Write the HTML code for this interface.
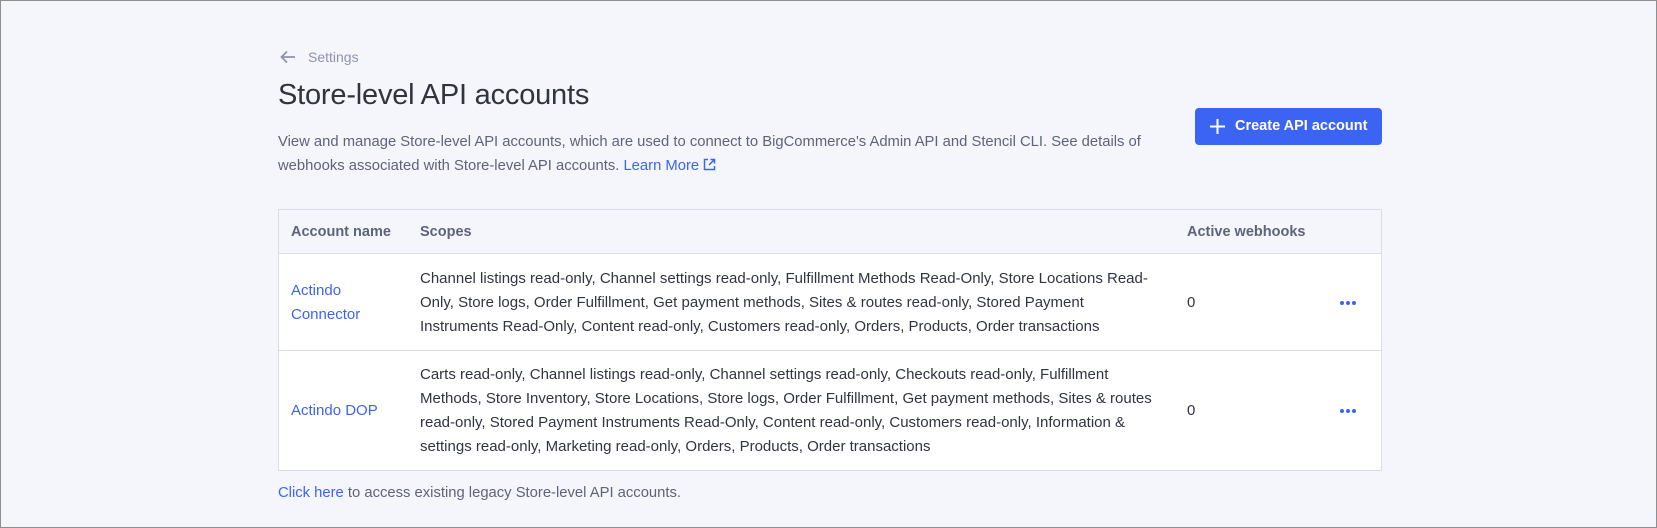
<!DOCTYPE html>
<html><head><meta charset="utf-8"><style>
*{margin:0;padding:0;box-sizing:border-box}
html,body{width:1657px;height:528px;overflow:hidden}
body{background:#f5f6fb;font-family:"Liberation Sans",sans-serif;color:#313440;position:relative;border:1px solid #8f8f8f}
.abs{position:absolute;white-space:nowrap}
.back{left:279px;top:48px;font-size:14px;color:#8c93ad}
.title{left:277px;top:78px;font-size:29px;font-weight:300;color:#313440;letter-spacing:-0.2px}
.desc{left:277px;top:129px;font-size:14.8px;line-height:24px;color:#5e637a}
a{color:#3c64f4;text-decoration:none}
.btn{left:1194px;top:107px;width:187px;height:37px;background:#3c64f4;border-radius:4px;color:#fff;font-size:14.5px;font-weight:bold;line-height:37px;padding-left:40px}
.btn svg{position:absolute;left:15px;top:11px}
.table{position:absolute;left:277px;top:208px;width:1104px;height:262px;background:#fff;border:1px solid #d9dce9}
.head{position:absolute;left:0;top:0;right:0;height:44px;background:#f5f6fb;border-bottom:1px solid #d9dce9;font-weight:bold;font-size:14.5px;color:#5e637a}
.row{position:absolute;left:0;right:0;font-size:15px;color:#313440}
.r1{top:44px;height:97px;border-bottom:1px solid #d9dce9}
.r2{top:141px;height:120px}
.c{position:absolute;white-space:nowrap;line-height:24px}
.dots{position:absolute;left:1061px;width:18px;height:4px}
.dots i{float:left;width:4px;height:4px;border-radius:50%;background:#3c64f4;margin-right:2px}
</style></head><body>
<div class="abs back"><svg width="16" height="14" viewBox="0 0 16 14" style="vertical-align:-2px;margin-right:12px"><path d="M15 7H2M7 1.5L1.5 7L7 12.5" stroke="#8c93ad" stroke-width="1.8" fill="none"/></svg>Settings</div>
<div class="abs title">Store-level API accounts</div>
<div class="abs desc">View and manage Store-level API accounts, which are used to connect to BigCommerce's Admin API and Stencil CLI. See details of<br>webhooks associated with Store-level API accounts. <a>Learn More <svg width="13" height="13" viewBox="0 0 13 13" style="vertical-align:-1px"><path d="M5 1.5H1.5v10h10V8M7.5 1.5h4v4M11.5 1.5L6 7" stroke="#3c64f4" stroke-width="1.5" fill="none"/></svg></a></div>
<div class="abs btn"><svg width="15" height="15" viewBox="0 0 15 15"><path d="M7.5 0v15M0 7.5h15" stroke="#fff" stroke-width="2"/></svg>Create API account</div>
<div class="table">
 <div class="head"><span class="c" style="left:12px;top:10px">Account name</span><span class="c" style="left:141px;top:10px">Scopes</span><span class="c" style="left:908px;top:10px">Active webhooks</span></div>
 <div class="row r1">
  <span class="c" style="left:12px;top:25px;color:#3c64f4">Actindo<br>Connector</span>
  <span class="c" style="left:141px;top:13px">Channel listings read-only, Channel settings read-only, Fulfillment Methods Read-Only, Store Locations Read-<br>Only, Store logs, Order Fulfillment, Get payment methods, Sites &amp; routes read-only, Stored Payment<br>Instruments Read-Only, Content read-only, Customers read-only, Orders, Products, Order transactions</span>
  <span class="c" style="left:908px;top:37px">0</span>
  <span class="dots" style="top:47px"><i></i><i></i><i></i></span>
 </div>
 <div class="row r2">
  <span class="c" style="left:12px;top:48px;color:#3c64f4">Actindo DOP</span>
  <span class="c" style="left:141px;top:12px">Carts read-only, Channel listings read-only, Channel settings read-only, Checkouts read-only, Fulfillment<br>Methods, Store Inventory, Store Locations, Store logs, Order Fulfillment, Get payment methods, Sites &amp; routes<br>read-only, Stored Payment Instruments Read-Only, Content read-only, Customers read-only, Information &amp;<br>settings read-only, Marketing read-only, Orders, Products, Order transactions</span>
  <span class="c" style="left:908px;top:48px">0</span>
  <span class="dots" style="top:58px"><i></i><i></i><i></i></span>
 </div>
</div>
<div class="abs" style="left:277px;top:484px;font-size:14.8px;color:#5e637a"><a>Click here</a> to access existing legacy Store-level API accounts.</div>
</body></html>
